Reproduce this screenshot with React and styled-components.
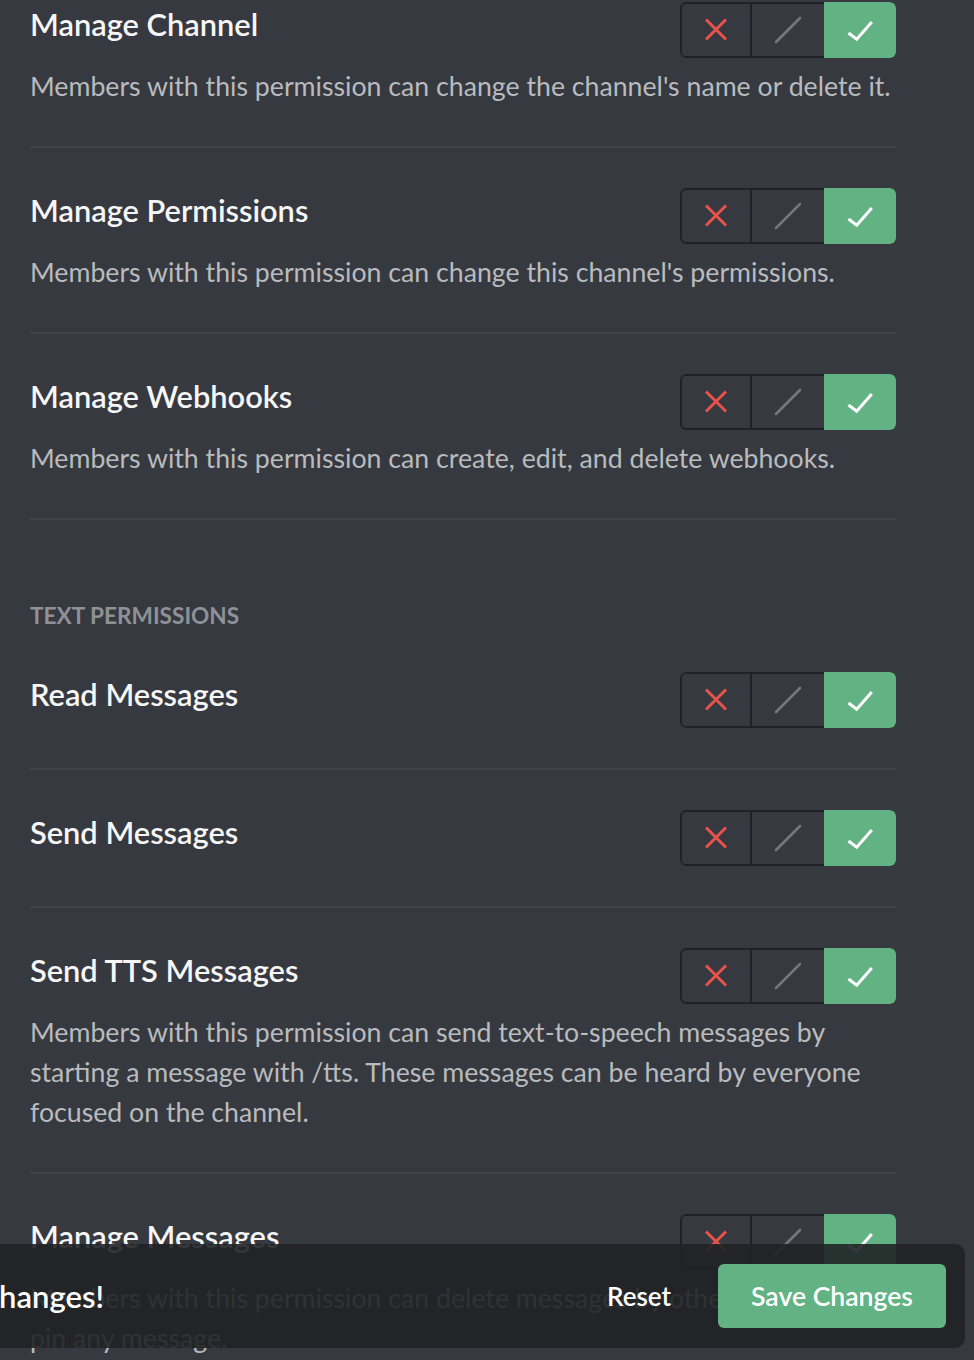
import React from "react";
import styled, { createGlobalStyle } from "styled-components";

const Global = createGlobalStyle`
  html, body { margin: 0; padding: 0; background: #36393f; }
  body { font-family: Lato, "Noto Sans", sans-serif; overflow: hidden; }
  * { box-sizing: border-box; }
`;

const Page = styled.div`
  position: relative;
  height: 1360px;
  overflow: hidden;
  padding: 2px 78px 0 30px;
`;

const Content = styled.div`
  width: 866px;
  display: flex;
  flex-direction: column;
`;

const Row = styled.div`
  padding-bottom: 40px;
  border-bottom: 2px solid #404349;
  margin-bottom: 40px;
`;

const RowHeader = styled.div`
  display: flex;
  justify-content: space-between;
  align-items: flex-start;
  height: 56px;
`;

const Title = styled.div`
  font-size: 30.8px;
  font-weight: 600;
  line-height: 46px;
  color: #f6f6f7;
  white-space: nowrap;
`;

const Description = styled.div`
  margin-top: 8px;
  font-size: 26.7px;
  line-height: 40px;
  color: #b9bbbe;
`;

const SectionHeader = styled.div`
  margin: 42px 0 42px;
  font-size: 22.6px;
  font-weight: 700;
  line-height: 28px;
  color: #8e9297;
  text-transform: uppercase;
`;

const Toggle = styled.div`
  display: flex;
  flex: 0 0 auto;
  border-radius: 6px;
  overflow: hidden;
`;

const Segment = styled.div`
  width: 72px;
  height: 56px;
  display: flex;
  align-items: center;
  justify-content: center;
  border-top: 2px solid #202225;
  border-bottom: 2px solid #202225;
  border-left: ${(p) => (p.$first ? "2px solid #202225" : "none")};
  border-right: ${(p) => (p.$first ? "2px solid #202225" : "none")};
  border-radius: ${(p) => (p.$first ? "6px 0 0 6px" : p.$last ? "0 6px 6px 0" : "0")};
  background: ${(p) => (p.$active ? "#63b284" : "transparent")};
  ${(p) => p.$active && "border-color: #63b284;"}
`;

const DenyIcon = () => (
  <svg width="28" height="28" viewBox="0 0 28 28">
    <path d="M4 3.5 L24 23.5 M24 3.5 L4 23.5" stroke="#e8524b" strokeWidth="3" fill="none" />
  </svg>
);

const NeutralIcon = () => (
  <svg width="28" height="28" viewBox="0 0 28 28">
    <path d="M2 26 L26 2" stroke="#72767d" strokeWidth="2.6" strokeLinecap="round" fill="none" />
  </svg>
);

const AllowIcon = () => (
  <svg width="28" height="28" viewBox="0 0 28 28">
    <path d="M2.5 17 L10.7 23.3 L25.8 6" stroke="#ffffff" strokeWidth="3" fill="none" />
  </svg>
);

const PermissionToggle = () => (
  <Toggle>
    <Segment $first>
      <DenyIcon />
    </Segment>
    <Segment>
      <NeutralIcon />
    </Segment>
    <Segment $last $active>
      <AllowIcon />
    </Segment>
  </Toggle>
);

const Permission = ({ title, desc }) => (
  <Row>
    <RowHeader>
      <Title>{title}</Title>
      <PermissionToggle />
    </RowHeader>
    {desc && <Description>{desc}</Description>}
  </Row>
);

const NoticeBar = styled.div`
  position: absolute;
  left: -600px;
  right: 9px;
  bottom: 12px;
  height: 104px;
  padding-right: 19px;
  display: flex;
  align-items: center;
  background: rgba(32, 34, 37, 0.9);
  border-radius: 10px;
  z-index: 2;
`;

const NoticeText = styled.div`
  flex: 0 0 704px;
  text-align: right;
  white-space: nowrap;
  font-size: 31px;
  font-weight: 600;
  color: #ffffff;
`;

const ResetButton = styled.button`
  margin-left: auto;
  margin-right: 47px;
  padding: 0;
  border: none;
  background: none;
  font-family: inherit;
  font-size: 26px;
  font-weight: 600;
  color: #ffffff;
  cursor: pointer;
`;

const SaveButton = styled.button`
  width: 228px;
  height: 64px;
  border: none;
  border-radius: 6px;
  background: #63b284;
  font-family: inherit;
  font-size: 26.6px;
  font-weight: 600;
  color: #ffffff;
  cursor: pointer;
`;

const general = [
  { title: "Manage Channel", desc: "Members with this permission can change the channel's name or delete it." },
  { title: "Manage Permissions", desc: "Members with this permission can change this channel's permissions." },
  { title: "Manage Webhooks", desc: "Members with this permission can create, edit, and delete webhooks." },
];

const text = [
  { title: "Read Messages" },
  { title: "Send Messages" },
  {
    title: "Send TTS Messages",
    desc: "Members with this permission can send text-to-speech messages by starting a message with /tts. These messages can be heard by everyone focused on the channel.",
  },
  {
    title: "Manage Messages",
    desc: "Members with this permission can delete messages by other members or pin any message.",
  },
  {
    title: "Embed Links",
  },
];

export default function App() {
  return (
    <>
      <Global />
      <Page>
        <Content>
          {general.map((p) => (
            <Permission key={p.title} {...p} />
          ))}
          <SectionHeader>Text Permissions</SectionHeader>
          {text.map((p) => (
            <Permission key={p.title} {...p} />
          ))}
        </Content>
        <NoticeBar>
          <NoticeText>Careful — you have unsaved changes!</NoticeText>
          <ResetButton>Reset</ResetButton>
          <SaveButton>Save Changes</SaveButton>
        </NoticeBar>
      </Page>
    </>
  );
}
